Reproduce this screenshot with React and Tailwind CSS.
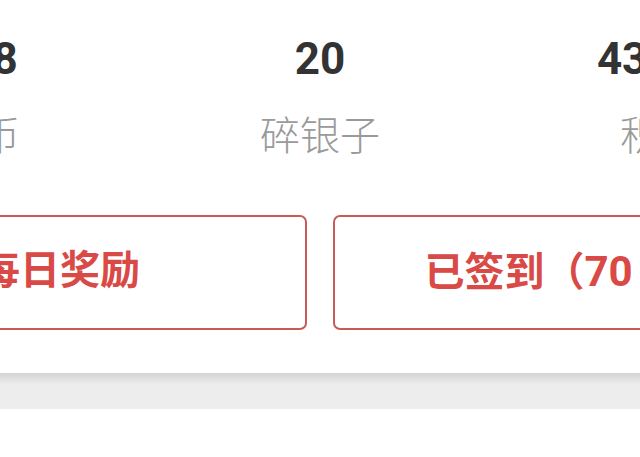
export default function App() {
  const stats = [
    { value: "108", label: "铜币" },
    { value: "20", label: "碎银子" },
    { value: "43210", label: "积分" },
  ];
  return (
    <div className="w-[640px] h-[457px] overflow-hidden bg-white flex flex-col">
      <div className="flex justify-center pt-[33px]">
        {stats.map((s) => (
          <div key={s.label} className="w-[340px] shrink-0 flex flex-col items-center">
            <div className="text-[44px] leading-[52px] font-bold text-[#333333] font-['Roboto',sans-serif]">
              {s.value}
            </div>
            <div className="mt-[24px] text-[40px] leading-[48px] font-light text-[#9a9a9a] font-['Noto_Sans_CJK_SC',sans-serif]">
              {s.label}
            </div>
          </div>
        ))}
      </div>
      <div className="flex justify-center gap-[26px] mt-[58px]">
        <button className="w-[494px] h-[115px] shrink-0 rounded-[7px] border-[2.5px] border-[#c95a5a] bg-white flex items-center justify-center text-[40px] font-bold text-[#d94a46] font-['Roboto','Noto_Sans_CJK_SC',sans-serif]">
          <span className="-mt-[3px]">每日奖励</span>
        </button>
        <button className="w-[494px] h-[115px] shrink-0 rounded-[7px] border-[2.5px] border-[#c95a5a] bg-white flex items-center justify-center text-[40px] font-bold text-[#d94a46] font-['Roboto','Noto_Sans_CJK_SC',sans-serif]">
          <span className="pr-[13px] -mt-[3px]">已签到（<span className="text-[42px]">70</span> 天）</span>
        </button>
      </div>
      <div className="mt-[43px] h-[36px] shrink-0 bg-[linear-gradient(to_bottom,#d4d4d4,#ededed_12px,#eeeeee)]"></div>
      <div className="flex-1 bg-white"></div>
    </div>
  );
}
